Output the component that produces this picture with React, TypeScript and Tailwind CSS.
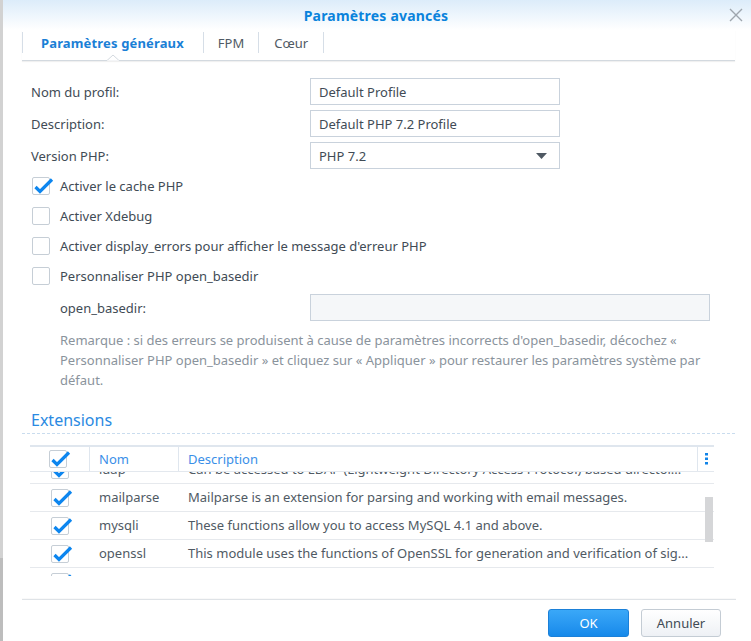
import React from "react";

const font = { fontFamily: '"Noto Sans", "Open Sans", "DejaVu Sans", sans-serif' };

function Check({ checked = false, className = "" }: { checked?: boolean; className?: string }) {
  return (
    <div className={"relative w-[18px] h-[18px] border border-[#c6ced6] rounded-[2px] bg-white shrink-0 " + className}>
      {checked && (
        <svg className="absolute left-0 top-0 overflow-visible" width="18" height="18" viewBox="0 0 18 18">
          <path d="M2.5 9 L7 13.5 L19 1.5" fill="none" stroke="#0d86ef" strokeWidth="3.2" strokeLinejoin="miter" strokeLinecap="butt" />
        </svg>
      )}
    </div>
  );
}

function Field({ label, value, select = false }: { label: string; value: string; select?: boolean }) {
  return (
    <div className="flex items-center h-[27px]">
      <div className="w-[279px] pt-[2px] text-[13px] text-[#414b55]">{label}</div>
      <div className="w-[250px] h-[27px] border border-[#c9d2dc] bg-white flex items-center pl-[8px] pr-[12px] text-[13px] text-[#414b55]">
        <span className="flex-1 pt-[2px]">{value}</span>
        {select && (
          <svg width="11" height="6" viewBox="0 0 11 6">
            <path d="M0 0 H11 L5.5 6 Z" fill="#4f5963" />
          </svg>
        )}
      </div>
    </div>
  );
}

function CheckRow({ label, checked = false }: { label: string; checked?: boolean }) {
  return (
    <div className="flex items-center h-[30px]">
      <Check checked={checked} className="ml-[1px]" />
      <span className="ml-[10px] pt-[2px] text-[13px] text-[#414b55]">{label}</span>
    </div>
  );
}

const rows = [
  { name: "ldap", desc: "Can be accessed to LDAP (Lightweight Directory Access Protocol) based director..." },
  { name: "mailparse", desc: "Mailparse is an extension for parsing and working with email messages." },
  { name: "mysqli", desc: "These functions allow you to access MySQL 4.1 and above." },
  { name: "openssl", desc: "This module uses the functions of OpenSSL for generation and verification of sig..." },
  { name: "pdo_mysql", desc: "PDO_MYSQL is a driver that implements the PHP Data Objects (PDO) interface." },
];

export default function App() {
  return (
    <div className="w-[751px] h-[641px] flex bg-white overflow-hidden" style={font}>
      <div className="w-[3px] flex flex-col shrink-0">
        <div className="h-[558px] bg-[#d2d2d2]" />
        <div className="flex-1 bg-[#bdbdbd]" />
      </div>
      <div className="flex-1 flex flex-col">
        {/* header */}
        <div className="h-[30px] grid grid-cols-[1fr_auto_1fr] items-center bg-gradient-to-b from-[#dcecfa] to-white">
          <div />
          <div className="text-[14px] font-bold text-[#0a83dc] -ml-[2px] tracking-[0.2px]">Paramètres avancés</div>
          <div className="flex justify-end pr-[8px]">
            <svg width="14" height="14" viewBox="0 0 14 14">
              <path d="M1 1 L13 13 M13 1 L1 13" stroke="#9ea6ae" strokeWidth="1.4" />
            </svg>
          </div>
        </div>
        {/* tabs */}
        <div className="ml-[19px] mr-[16px] h-[31px] flex items-stretch border-b border-[#d3d9df] shadow-[0_1px_1px_rgba(0,0,0,0.06)] relative">
          <div className="relative flex items-center pl-[18px] pr-[19px] border-l border-r border-[#d6dee7] my-[2px] mb-[7px] text-[13px] font-bold text-[#1a80d6] tracking-[0.15px]">
            <span className="mt-[3px]">Paramètres généraux</span>
            <svg className="absolute left-[84px] -bottom-[8px]" width="12" height="7" viewBox="0 0 12 7">
              <path d="M0 6.5 L6 1 L12 6.5" fill="white" stroke="#d3d9df" strokeWidth="1" />
              <rect x="0" y="6.5" width="12" height="1" fill="white" />
            </svg>
          </div>
          <div className="flex items-center px-[14px] border-r border-[#d6dee7] my-[2px] mb-[7px] text-[13px] text-[#505a64]">
            <span className="mt-[3px]">FPM</span>
          </div>
          <div className="flex items-center px-[15px] border-r border-[#d6dee7] my-[2px] mb-[7px] text-[13px] text-[#505a64]">
            <span className="mt-[3px]">Cœur</span>
          </div>
        </div>
        {/* form */}
        <div className="pl-[28px] pt-[17px] flex flex-col">
          <div className="flex flex-col gap-[5px]">
            <Field label="Nom du profil:" value="Default Profile" />
            <Field label="Description:" value="Default PHP 7.2 Profile" />
            <Field label="Version PHP:" value="PHP 7.2" select />
          </div>
          <div className="mt-[2px] flex flex-col">
            <CheckRow label="Activer le cache PHP" checked />
            <CheckRow label="Activer Xdebug" />
            <CheckRow label="Activer display_errors pour afficher le message d'erreur PHP" />
            <CheckRow label="Personnaliser PHP open_basedir" />
          </div>
          <div className="mt-[3px] flex items-center h-[27px] pl-[29px]">
            <div className="w-[250px] pt-[2px] text-[13px] text-[#414b55]">open_basedir:</div>
            <div className="w-[400px] h-[27px] border border-[#c9d2dc] bg-[#f5f7f9]" />
          </div>
          <div className="mt-[9px] pl-[29px] pr-[30px] text-[13px] leading-[20px] text-[#8a939c]">
            Remarque : si des erreurs se produisent à cause de paramètres incorrects d'open_basedir, décochez « Personnaliser PHP open_basedir » et cliquez sur « Appliquer » pour restaurer les paramètres système par défaut.
          </div>
        </div>
        {/* extensions */}
        <div className="ml-[19px] mr-[16px] mt-[20px] border-b border-dashed border-[#c9dcee] pb-[3px] pl-[9px]">
          <div className="text-[16px] leading-[20px] text-[#2a8ae2]">Extensions</div>
        </div>
        <div className="ml-[27px] w-[684px] mt-[11px]">
          <div className="h-[27px] flex items-stretch border-t-2 border-[#dfe6ee] border-b border-b-[#e3e8ee] text-[13px] text-[#3a8fe8]">
            <div className="w-[60px] flex items-center pl-[19px] border-r border-[#dfe6ee]">
              <Check checked />
            </div>
            <div className="w-[89px] flex items-center pl-[9px] pt-[1px] border-r border-[#dfe6ee]">Nom</div>
            <div className="flex-1 flex items-center pl-[9px] pt-[1px] border-r border-[#dfe6ee]">Description</div>
            <div className="w-[16px] flex items-center justify-center">
              <svg width="3" height="12" viewBox="0 0 3 12">
                <rect x="0" y="0" width="3" height="2.5" fill="#1184e8" />
                <rect x="0" y="4.5" width="3" height="2.5" fill="#1184e8" />
                <rect x="0" y="9" width="3" height="2.5" fill="#1184e8" />
              </svg>
            </div>
          </div>
          <div className="relative h-[104px] overflow-hidden">
            <div className="-mt-[16px] flex flex-col">
              {rows.map((r) => (
                <div key={r.name} className="h-[28px] flex items-center border-b border-[#e6e9ed] text-[13px] text-[#505a64] shrink-0">
                  <div className="w-[60px] pl-[21px] flex items-center">
                    <Check checked />
                  </div>
                  <div className="w-[89px] pl-[9px] pt-[1px]">{r.name}</div>
                  <div className="flex-1 pl-[9px] pt-[1px] whitespace-nowrap overflow-hidden">{r.desc}</div>
                </div>
              ))}
            </div>
            <div className="absolute right-[1px] top-[25px] w-[8px] h-[45px] bg-[#d5d6d8]" />
          </div>
        </div>
        <div className="flex-1" />
        {/* footer */}
        <div className="ml-[19px] mr-[15px] border-t border-[#dfe3e7] shadow-[0_-1px_1px_rgba(0,0,0,0.03)]" />
        <div className="h-[41px] flex items-start justify-end gap-[12px] pr-[30px] pt-[9px]">
          <button className="w-[81px] h-[28px] rounded-[3px] border border-[#1b80d8] bg-gradient-to-b from-[#3aa8f8] to-[#1589ea] text-white text-[13px] pt-[1px]">OK</button>
          <button className="w-[80px] h-[28px] rounded-[3px] border border-[#c4ccd4] bg-gradient-to-b from-white to-[#eef1f5] text-[#414b55] text-[13px] pt-[1px]">Annuler</button>
        </div>
      </div>
    </div>
  );
}
